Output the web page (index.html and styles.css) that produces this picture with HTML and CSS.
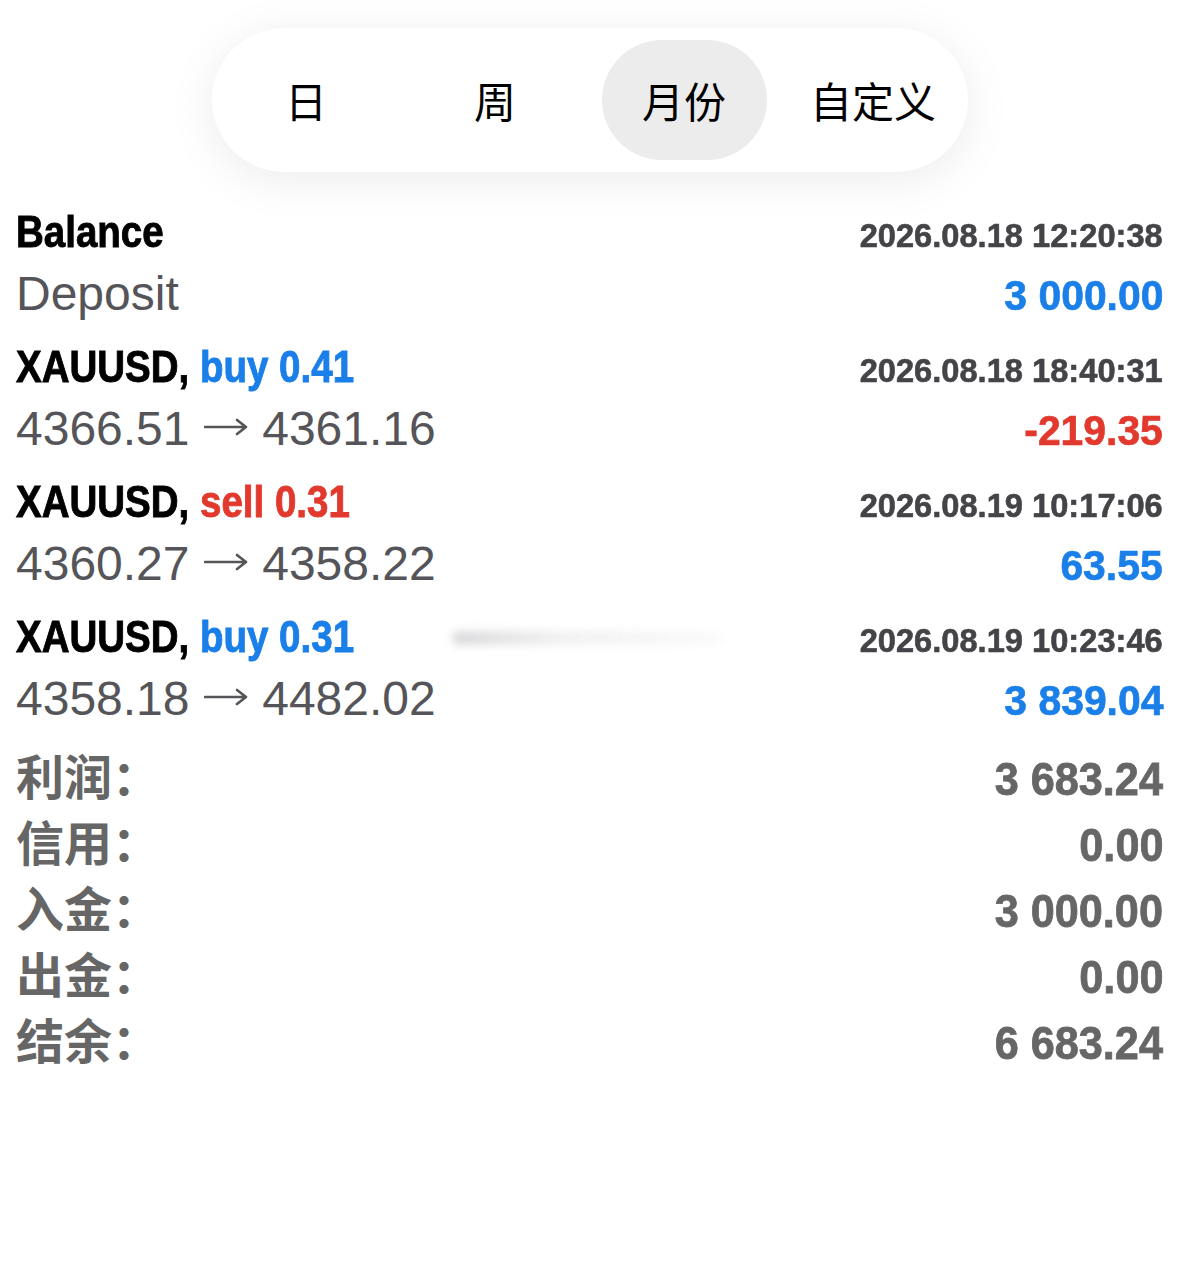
FILE: index.html
```html
<!DOCTYPE html>
<html lang="zh-CN">
<head>
<meta charset="utf-8">
<title>History</title>
<link rel="stylesheet" href="styles.css">
</head>
<body>
<div class="tabs-wrap">
  <div class="pill">
    <div class="tab">日</div>
    <div class="tab">周</div>
    <div class="tab active">月份</div>
    <div class="tab">自定义</div>
  </div>
</div>

<div class="list">
  <div class="record">
    <div class="line">
      <div class="title">Balance</div>
      <div class="date">2026.08.18 12:20:38</div>
    </div>
    <div class="line">
      <div class="sub">Deposit</div>
      <div class="amount blue">3 000.00</div>
    </div>
  </div>

  <div class="record">
    <div class="line">
      <div class="title">XAUUSD, <span class="blue">buy 0.41</span></div>
      <div class="date">2026.08.18 18:40:31</div>
    </div>
    <div class="line">
      <div class="sub">4366.51 <svg class="arrow" viewBox="0 0 44 20" width="44" height="20"><path d="M1 10H42M33 3L42 10L33 17" fill="none" stroke="#555559" stroke-width="2.6" stroke-linecap="round" stroke-linejoin="round"/></svg> 4361.16</div>
      <div class="amount red">-219.35</div>
    </div>
  </div>

  <div class="record">
    <div class="line">
      <div class="title">XAUUSD, <span class="red">sell 0.31</span></div>
      <div class="date">2026.08.19 10:17:06</div>
    </div>
    <div class="line">
      <div class="sub">4360.27 <svg class="arrow" viewBox="0 0 44 20" width="44" height="20"><path d="M1 10H42M33 3L42 10L33 17" fill="none" stroke="#555559" stroke-width="2.6" stroke-linecap="round" stroke-linejoin="round"/></svg> 4358.22</div>
      <div class="amount blue">63.55</div>
    </div>
  </div>

  <div class="record">
    <div class="line">
      <div class="title">XAUUSD, <span class="blue">buy 0.31</span></div>
      <div class="date">2026.08.19 10:23:46</div>
    </div>
    <div class="line">
      <div class="sub">4358.18 <svg class="arrow" viewBox="0 0 44 20" width="44" height="20"><path d="M1 10H42M33 3L42 10L33 17" fill="none" stroke="#555559" stroke-width="2.6" stroke-linecap="round" stroke-linejoin="round"/></svg> 4482.02</div>
      <div class="amount blue">3 839.04</div>
    </div>
  </div>
</div>

<div class="summary">
  <div class="srow"><div class="slabel">利润：</div><div class="svalue">3 683.24</div></div>
  <div class="srow"><div class="slabel">信用：</div><div class="svalue">0.00</div></div>
  <div class="srow"><div class="slabel">入金：</div><div class="svalue">3 000.00</div></div>
  <div class="srow"><div class="slabel">出金：</div><div class="svalue">0.00</div></div>
  <div class="srow"><div class="slabel">结余：</div><div class="svalue">6 683.24</div></div>
</div>

<div class="smudge"></div>
</body>
</html>
```
FILE: styles.css
```css
html, body {
  margin: 0;
  padding: 0;
  background: #ffffff;
}
body {
  font-family: "Liberation Sans", Arial, "Noto Sans CJK SC", sans-serif;
  width: 1179px;
  height: 1270px;
  overflow: hidden;
  position: relative;
}

.tabs-wrap {
  padding-top: 28px;
  display: flex;
  justify-content: center;
}
.pill {
  width: 756px;
  height: 144px;
  border-radius: 72px;
  background: #ffffff;
  box-shadow: 0 8px 48px rgba(0, 0, 0, 0.08);
  display: grid;
  grid-template-columns: repeat(4, 1fr);
  align-items: center;
}
.tab {
  margin: 0 12px;
  height: 120px;
  line-height: 120px;
  border-radius: 60px;
  text-align: center;
  font-family: "Noto Sans CJK SC", sans-serif;
  font-size: 42px;
  font-weight: 400;
  color: #000000;
}
.tab.active {
  background: #ececec;
}

.list {
  margin-top: 29px;
  padding: 0 16px;
}
.record {
  margin-bottom: 11px;
}
.line {
  height: 62px;
  line-height: 62px;
  display: flex;
  justify-content: space-between;
  align-items: baseline;
  white-space: nowrap;
}
.title {
  font-size: 44px;
  font-weight: 700;
  color: #000000;
  -webkit-text-stroke: 0.9px currentColor;
  transform: scaleX(0.875);
  transform-origin: left center;
}
.title .blue, .title .red {
  -webkit-text-stroke: 0.9px currentColor;
}
.date {
  font-size: 34px;
  font-weight: 700;
  color: #444448;
  -webkit-text-stroke: 0.6px currentColor;
  transform: scaleX(0.96);
  transform-origin: right center;
}
.sub {
  font-size: 48px;
  font-weight: 400;
  color: #555559;
}
.arrow {
  display: inline-block;
  vertical-align: 8px;
  margin: 0 1px;
}
.amount {
  font-size: 43px;
  font-weight: 700;
  -webkit-text-stroke: 0.7px currentColor;
  transform: scaleX(0.95);
  transform-origin: right center;
}
.blue { color: #1a7fe8; }
.red { color: #e2392e; }

.summary {
  margin-top: 9px;
  padding: 0 16px;
}
.srow {
  height: 66px;
  line-height: 66px;
  display: flex;
  justify-content: space-between;
  align-items: baseline;
  white-space: nowrap;
}
.slabel {
  font-family: "Noto Sans CJK SC", sans-serif;
  font-size: 48px;
  font-weight: 700;
  color: #666666;
}
.svalue {
  font-size: 47px;
  font-weight: 700;
  color: #666666;
  -webkit-text-stroke: 0.8px currentColor;
  transform: scaleX(0.92);
  transform-origin: right center;
}

.smudge {
  position: absolute;
  left: 452px;
  top: 631px;
  width: 270px;
  height: 14px;
  background: linear-gradient(90deg, rgba(170, 170, 175, 0.45), rgba(200, 200, 205, 0.25) 40%, rgba(215, 215, 220, 0.12));
  filter: blur(4px);
  border-radius: 7px;
}
```
